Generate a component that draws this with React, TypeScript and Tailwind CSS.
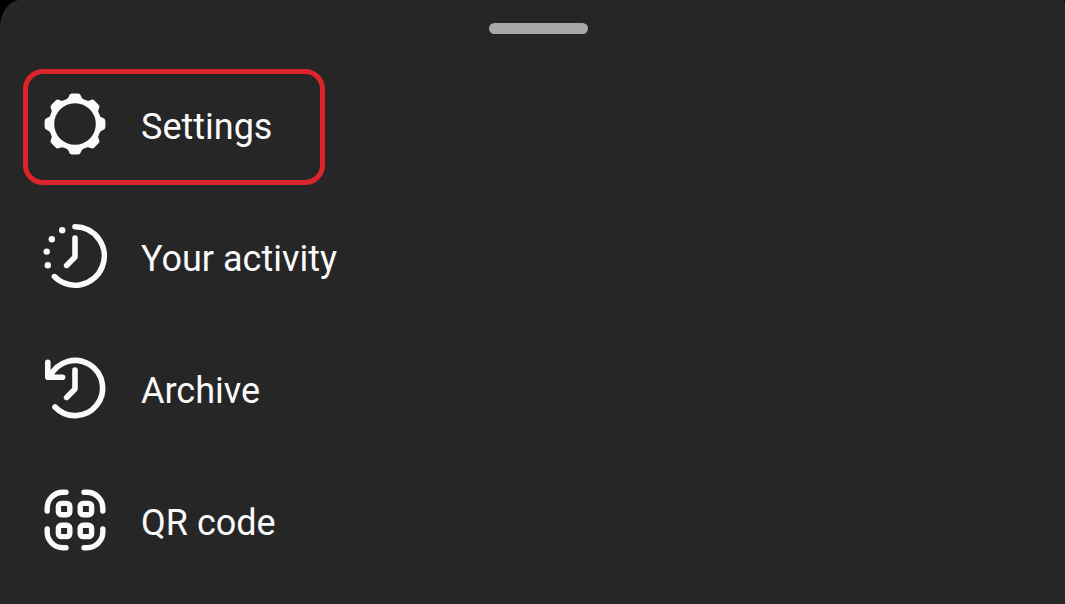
import type { ReactNode } from 'react'

interface MenuItem {
  label: string
  icon: ReactNode
  highlighted?: boolean
}

// All icons are drawn around 0,0 so the strokes stay symmetric
function Icon({ children, strokeWidth = 5.6 }: { children: ReactNode; strokeWidth?: number }) {
  return (
    <svg
      viewBox="-36 -36 72 72"
      className="mb-1.5 size-18 shrink-0"
      fill="none"
      stroke="currentColor"
      strokeWidth={strokeWidth}
      strokeLinecap="round"
      strokeLinejoin="round"
      aria-hidden="true"
    >
      {children}
    </svg>
  )
}

const teeth = [0, 45, 90, 135, 180, 225, 270, 315]
const corners = [0, 90, 180, 270]

function SettingsIcon() {
  return (
    <Icon>
      <circle r="23.5" strokeWidth="5.4" />
      {teeth.map(angle => (
        <path
          key={angle}
          d="M-9 -24 C-7.2 -25.4 -6.6 -26.4 -5.9 -28.2 Q-5.1 -30.4 -3 -30.4 H3 Q5.1 -30.4 5.9 -28.2 C6.6 -26.4 7.2 -25.4 9 -24 Z"
          fill="currentColor"
          stroke="none"
          transform={`rotate(${angle})`}
        />
      ))}
    </Icon>
  )
}

function ActivityIcon() {
  return (
    <Icon>
      <path d="M0 -29.2 A29.2 29.2 0 1 1 -20.6 20.6" />
      <path d="M0 -18 V1 L-8.4 9.4" />
      <g fill="currentColor" stroke="none">
        <circle cx="-12.8" cy="-25.8" r="3.2" />
        <circle cx="-23.2" cy="-16.8" r="3.2" />
        <circle cx="-28.3" cy="-4.4" r="3.2" />
        <circle cx="-27.2" cy="9.2" r="3.2" />
      </g>
    </Icon>
  )
}

function ArchiveIcon() {
  return (
    <Icon>
      <path d="M-20 19 A27.6 27.6 0 1 0 -25 -11.5" />
      <path d="M-27.2 -25.6 V-10.8 H-12.4" />
      <path d="M0 -18 V1 L-8.4 9.4" />
    </Icon>
  )
}

function QrCodeIcon() {
  return (
    <Icon strokeWidth={5.4}>
      {corners.map(angle => (
        <g key={angle} transform={`rotate(${angle})`}>
          <path d="M-9 -27.8 H-12 A15.8 15.8 0 0 0 -27.8 -12 V-9" />
          <rect x="-16.6" y="-16.6" width="11.4" height="11.4" rx="3" />
        </g>
      ))}
    </Icon>
  )
}

const items: MenuItem[] = [
  { label: 'Settings', icon: <SettingsIcon />, highlighted: true },
  { label: 'Your activity', icon: <ActivityIcon /> },
  { label: 'Archive', icon: <ArchiveIcon /> },
  { label: 'QR code', icon: <QrCodeIcon /> },
]

export default function App() {
  return (
    <div className="min-h-screen bg-black font-[Roboto,sans-serif]">
      <main className="min-h-screen [border-top-left-radius:20px_28px] rounded-tr-[3px] bg-[#262626] pt-[23px] text-[#fafafa]">
        {/* Drag handle */}
        <div className="flex justify-center pl-3">
          <div className="h-[11px] w-[99px] rounded-full bg-[#a8a8a8]" />
        </div>

        {/* Menu */}
        <nav className="mt-[35px] px-[23px]">
          <ul className="flex flex-col gap-4">
            {items.map(item => (
              <li key={item.label}>
                <button
                  type="button"
                  className={`flex h-[116px] min-w-[302px] items-center gap-[30px] rounded-[20px] border-[5px] px-[11px] text-left ${
                    item.highlighted ? 'border-[#db252b]' : 'border-transparent'
                  }`}
                >
                  {item.icon}
                  <span className="text-[36px] leading-[42px] whitespace-nowrap">{item.label}</span>
                </button>
              </li>
            ))}
          </ul>
        </nav>
      </main>
    </div>
  )
}
